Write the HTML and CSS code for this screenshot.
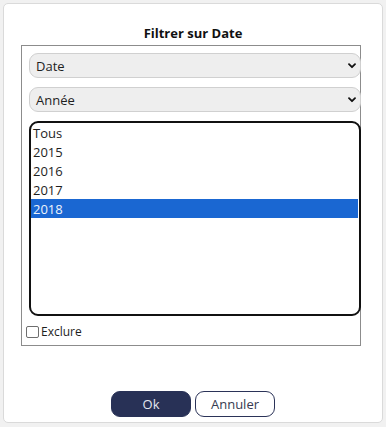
FILE: index.html
```html
<!DOCTYPE html>
<html lang="fr">
<head>
<meta charset="utf-8">
<title>Filtrer sur Date</title>
<link rel="stylesheet" href="styles.css">
</head>
<body>
<div class="dialog">
  <div class="title">Filtrer sur Date</div>
  <div class="box">
    <div class="select">
      <span>Date</span>
      <svg class="chev" width="8" height="6" viewBox="0 0 8 6"><path d="M1 1.2 L4 4.2 L7 1.2" fill="none" stroke="#111" stroke-width="1.8" stroke-linecap="round" stroke-linejoin="round"/></svg>
    </div>
    <div class="select">
      <span>Année</span>
      <svg class="chev" width="8" height="6" viewBox="0 0 8 6"><path d="M1 1.2 L4 4.2 L7 1.2" fill="none" stroke="#111" stroke-width="1.8" stroke-linecap="round" stroke-linejoin="round"/></svg>
    </div>
    <div class="listbox">
      <div class="opt">Tous</div>
      <div class="opt">2015</div>
      <div class="opt">2016</div>
      <div class="opt">2017</div>
      <div class="opt sel">2018</div>
    </div>
    <label class="check"><span class="cb"></span>Exclure</label>
  </div>
  <div class="spacer"></div>
  <div class="buttons">
    <button class="btn ok">Ok</button>
    <button class="btn cancel">Annuler</button>
  </div>
</div>
</body>
</html>
```

FILE: styles.css
```css
html, body {
  margin: 0;
  padding: 0;
}
body {
  background: #f1f1f1;
  width: 386px;
  height: 427px;
  overflow: hidden;
  font-family: "Open Sans", "Liberation Sans", sans-serif;
  color: #1e1e1e;
}
.dialog {
  box-sizing: border-box;
  margin: 3px 0 0 3px;
  width: 380px;
  height: 420px;
  background: #fff;
  border: 1px solid #dadada;
  border-radius: 5px;
  padding: 20px 0 5px 0;
  display: flex;
  flex-direction: column;
}
.title {
  font-weight: 700;
  font-size: 13px;
  line-height: 18px;
  text-align: center;
  color: #111;
}
.box {
  box-sizing: border-box;
  margin: 3px 0 0 17px;
  width: 340px;
  height: 301px;
  border: 1px solid #8c8c8c;
  display: flex;
  flex-direction: column;
  padding-top: 7px;
}
.select {
  box-sizing: border-box;
  margin-left: 7px;
  width: 332px;
  height: 25px;
  border: 1px solid #d0d0d0;
  border-radius: 9px;
  background: #eeeeee;
  display: flex;
  align-items: center;
  justify-content: space-between;
  padding: 0 4px 0 6px;
  font-size: 13px;
  color: #1e1e1e;
  margin-bottom: 9px;
}
.chev {
  display: block;
}
.listbox {
  box-sizing: border-box;
  margin-left: 7px;
  width: 332px;
  height: 195px;
  border: 2px solid #111;
  border-radius: 9px;
  font-size: 13px;
}
.opt {
  height: 19px;
  line-height: 20px;
  padding-left: 2px;
  color: #1e1e1e;
}
.opt.sel {
  background: #1a67d2;
  color: #eef3fb;
  margin-right: 1px;
}
.check {
  display: flex;
  align-items: center;
  margin: 9px 0 0 4px;
  font-size: 12px;
  line-height: 14px;
  color: #1e1e1e;
}
.cb {
  box-sizing: border-box;
  width: 13px;
  height: 12px;
  border: 1px solid #6e6e6e;
  border-radius: 2px;
  background: #fff;
  margin-right: 2px;
}
.spacer {
  flex: 1;
}
.buttons {
  display: flex;
  justify-content: center;
  gap: 4px;
}
.btn {
  box-sizing: border-box;
  width: 80px;
  height: 26px;
  border-radius: 9px;
  font-family: "Open Sans", "Liberation Sans", sans-serif;
  font-size: 13px;
  padding: 0;
  margin: 0;
}
.ok {
  background: #283156;
  border: 1px solid #283156;
  color: #e4e7f0;
}
.cancel {
  background: #fff;
  border: 1px solid #2b3358;
  color: #363b50;
}
```
